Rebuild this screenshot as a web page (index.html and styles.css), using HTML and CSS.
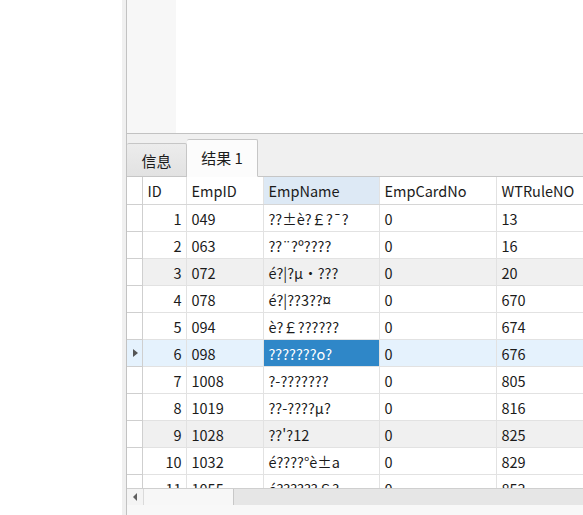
FILE: index.html
```html
<!DOCTYPE html>
<html lang="zh-CN">
<head>
    <meta charset="UTF-8">
    <meta name="viewport" content="width=device-width, initial-scale=1.0">
    <title>查询结果</title>
    <link rel="stylesheet" href="styles.css">
</head>
<body>

    <div class="frame">
        <div class="pane">

            <div class="editor">
                <div class="gutter"></div>
                <div class="code"></div>
            </div>

            <div class="tabbar">
                <div class="tab">信息</div>
                <div class="tab active">结果 1</div>
            </div>

            <div class="grid">
                <table>
                    <colgroup>
                        <col class="c-mark">
                        <col class="c-id">
                        <col class="c-emp">
                        <col class="c-name">
                        <col class="c-card">
                        <col class="c-rule">
                    </colgroup>
                    <thead>
                        <tr>
                            <th class="mark"></th>
                            <th>ID</th>
                            <th>EmpID</th>
                            <th class="sorted">EmpName</th>
                            <th>EmpCardNo</th>
                            <th>WTRuleNO</th>
                        </tr>
                    </thead>
                    <tbody>
                        <tr><td class="mark"></td><td class="num">1</td><td>049</td><td>??±è?￡?¯?</td><td>0</td><td>13</td></tr>
                        <tr><td class="mark"></td><td class="num">2</td><td>063</td><td>??¨?º????</td><td>0</td><td>16</td></tr>
                        <tr class="shade"><td class="mark"></td><td class="num">3</td><td>072</td><td>é?|?µ·???</td><td>0</td><td>20</td></tr>
                        <tr><td class="mark"></td><td class="num">4</td><td>078</td><td>é?|??3??¤</td><td>0</td><td>670</td></tr>
                        <tr><td class="mark"></td><td class="num">5</td><td>094</td><td>è?￡??????</td><td>0</td><td>674</td></tr>
                        <tr class="current"><td class="mark"><span class="arrow"></span></td><td class="num">6</td><td>098</td><td class="picked">???????o?</td><td>0</td><td>676</td></tr>
                        <tr><td class="mark"></td><td class="num">7</td><td>1008</td><td>?-???????</td><td>0</td><td>805</td></tr>
                        <tr><td class="mark"></td><td class="num">8</td><td>1019</td><td>??-????µ?</td><td>0</td><td>816</td></tr>
                        <tr class="shade"><td class="mark"></td><td class="num">9</td><td>1028</td><td>??'?12</td><td>0</td><td>825</td></tr>
                        <tr><td class="mark"></td><td class="num">10</td><td>1032</td><td>é????°è±a</td><td>0</td><td>829</td></tr>
                        <tr><td class="mark"></td><td class="num">11</td><td>1055</td><td>é??????￡?</td><td>0</td><td>853</td></tr>
                    </tbody>
                </table>
            </div>

            <div class="hscroll">
                <div class="sb-btn"><span class="sb-left"></span></div>
                <div class="sb-thumb"></div>
                <div class="sb-track"></div>
            </div>

            <div class="status"></div>

        </div>
    </div>

</body>
</html>
```

FILE: styles.css
```css
html, body {
    margin: 0;
    padding: 0;
    height: 100%;
    overflow: hidden;
}

body {
    font-family: "Noto Sans CJK SC", "Noto Sans", sans-serif;
    font-size: 14.5px;
    color: #1b1b1b;
    background-color: #fff;
    padding-left: 122px;
}

.frame {
    height: 515px;
    padding-left: 4px;
    background-color: #f0f0f0;
}

.pane {
    height: 100%;
    border-left: 1px solid #c2c2c2;
    display: flex;
    flex-direction: column;
}

/* editor area above the results */
.editor {
    height: 133px;
    flex: none;
    display: flex;
    border-bottom: 1px solid #c2c2c2;
    background-color: #fff;
}

.gutter {
    width: 49px;
    background-color: #f7f7f7;
}

.code {
    flex: 1;
}

/* tabs */
.tabbar {
    height: 42px;
    flex: none;
    display: flex;
    align-items: flex-end;
    background-color: #f0f0f0;
    border-bottom: 1px solid #c6c6c6;
}

.tab {
    box-sizing: border-box;
    height: 34px;
    width: 60px;
    margin-bottom: -1px;
    display: flex;
    align-items: center;
    justify-content: center;
    background: linear-gradient(#ececec, #e2e2e2);
    border: 1px solid #c6c6c6;
    border-left: none;
    border-radius: 2px 2px 0 0;
    font-size: 15px;
}

.tab.active {
    height: 38px;
    width: 71px;
    background: #fcfcfc;
    border-bottom-color: #fcfcfc;
    padding-bottom: 2px;
}

/* result grid */
.grid {
    height: 311px;
    flex: none;
    overflow: hidden;
    background-color: #fff;
}

table {
    border-collapse: collapse;
    table-layout: fixed;
    width: 490px;
}

.c-mark { width: 15px; }
.c-id { width: 44px; }
.c-emp { width: 77px; }
.c-name { width: 116px; }
.c-card { width: 117px; }
.c-rule { width: 121px; }

th, td {
    box-sizing: border-box;
    height: 27px;
    padding: 2px 5px 0;
    text-align: left;
    font-weight: normal;
    white-space: nowrap;
    overflow: hidden;
    border-right: 1px solid #e2e2e2;
    border-bottom: 1px solid #e2e2e2;
    line-height: 24px;
}

th {
    border-bottom-color: #d6d6d6;
}

th.sorted {
    background-color: #dde9f5;
}

td.mark, th.mark {
    padding: 0;
    border-right-color: #cfcfcf;
    border-bottom-color: #cfcfcf;
    background-color: #fff;
}

td.num {
    text-align: right;
    padding-right: 4px;
}

tr.shade td {
    background-color: #f0f0f0;
}

tr.shade td.mark {
    background-color: #fff;
}

tr.current td {
    background-color: #e5f2fd;
}

tr.current td.mark {
    background-color: #e5f2fd;
}

tr.current td.picked {
    background-color: #2f87c8;
    color: #fff;
}

.arrow {
    display: block;
    width: 0;
    height: 0;
    margin-left: 6px;
    border-top: 4px solid transparent;
    border-bottom: 4px solid transparent;
    border-left: 5px solid #555;
}

/* horizontal scroll bar */
.hscroll {
    height: 16px;
    flex: none;
    display: flex;
    border-top: 1px solid #cfcfcf;
    background-color: #e6e6e6;
}

.sb-btn {
    width: 16px;
    display: flex;
    align-items: center;
    justify-content: center;
    background-color: #f4f4f4;
}

.sb-left {
    width: 0;
    height: 0;
    border-top: 4px solid transparent;
    border-bottom: 4px solid transparent;
    border-right: 4px solid #606060;
}

.sb-thumb {
    width: 89px;
    background-color: #f7f7f7;
    border-left: 1px solid #dadada;
    border-right: 1px solid #c8c8c8;
}

.sb-track {
    flex: 1;
}

.status {
    flex: 1;
    background-color: #f8f8f8;
}
```
